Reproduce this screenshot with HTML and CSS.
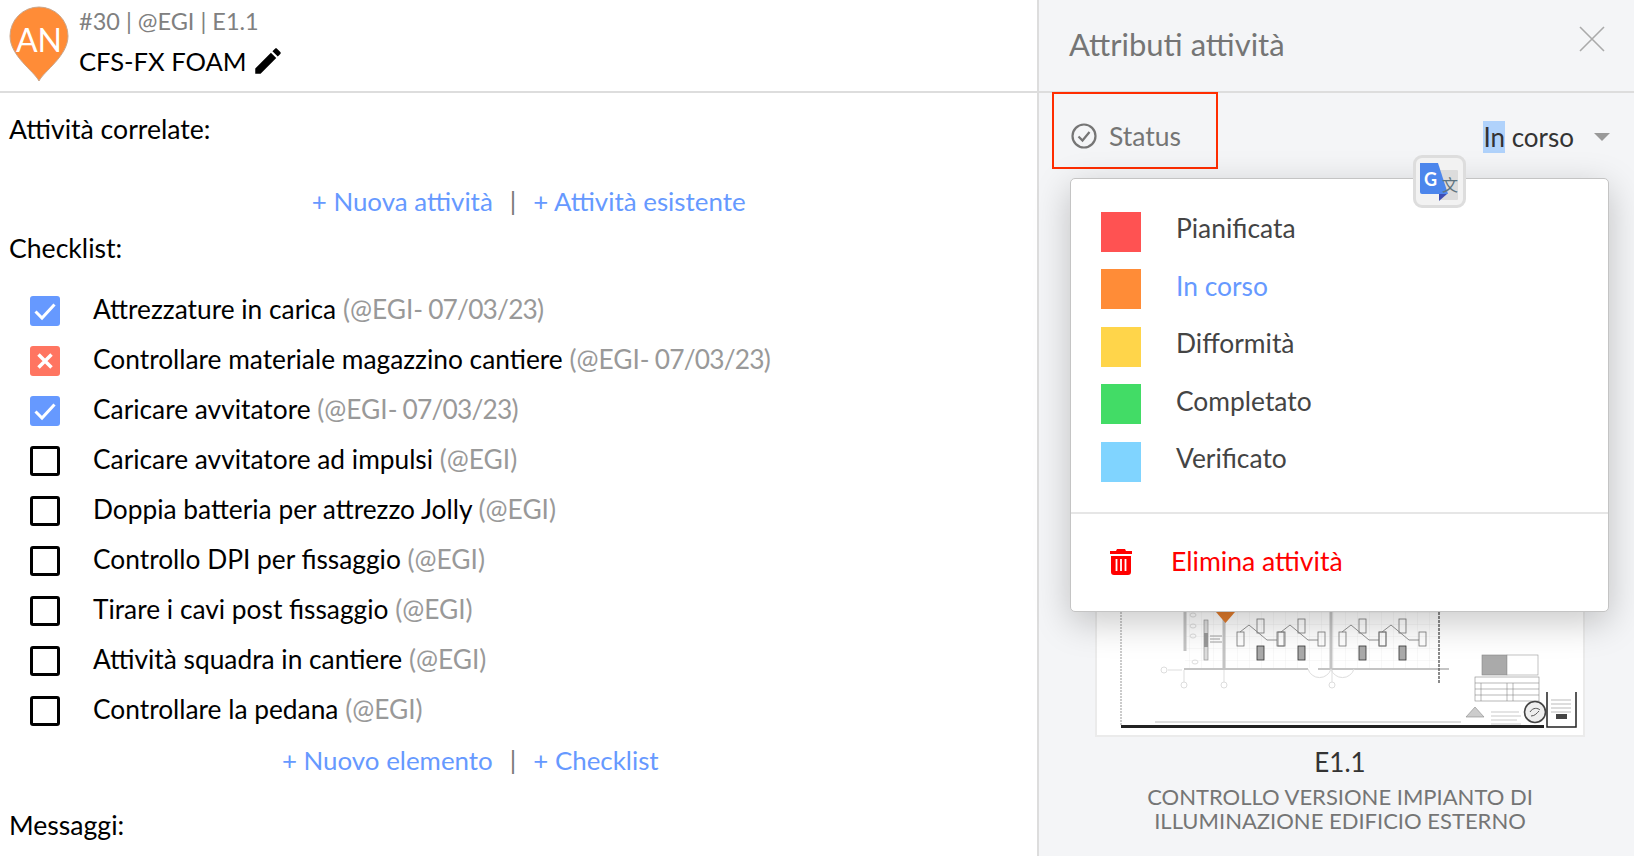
FILE: index.html
```html
<!DOCTYPE html>
<html lang="it">
<head>
<meta charset="UTF-8" />
<title>Attività</title>
<link rel="stylesheet" href="styles.css">
</head>
<body>

<main class="detail">
  <header class="detail-head">
    <div class="pin">
      <svg width="60" height="76" viewBox="0 0 60 76"><path d="M30 75 C25 65 1 50 1 30 A29 29 0 0 1 59 30 C59 50 35 65 30 75 Z" fill="#ff8c37" stroke="#c9a68c" stroke-width="1"/></svg>
      <span class="pin-label">AN</span>
    </div>
    <div class="head-text">
      <div class="head-meta">#30 | @EGI | E1.1</div>
      <div class="head-title">CFS-FX FOAM
        <svg class="pencil" width="34" height="34" viewBox="0 0 24 24"><path d="M3 17.25V21h3.75L17.81 9.94l-3.75-3.75L3 17.25zM20.71 7.04c.39-.39.39-1.02 0-1.41l-2.34-2.34c-.39-.39-1.02-.39-1.41 0l-1.83 1.83 3.75 3.75 1.83-1.83z"/></svg>
      </div>
    </div>
  </header>

  <div class="section-title first">Attività correlate:</div>
  <div class="links links-top">
    <a class="link-left">+ Nuova attività</a><span class="sep">|</span><a>+ Attività esistente</a>
  </div>
  <div class="section-title">Checklist:</div>

  <ul class="checklist">
    <li><span class="box done"><svg width="30" height="30" viewBox="0 0 30 30"><path d="M5.500 15.500l6.500 6.500L24.500 8.500" fill="none" stroke="#fff" stroke-width="3"/></svg></span>Attrezzature in carica <span class="who">(@EGI<span class="date">- 07/03/23</span>)</span></li>
    <li><span class="box fail"><svg width="30" height="30" viewBox="0 0 30 30"><path d="M8.500 8.500l13 13M21.500 8.500l-13 13" fill="none" stroke="#fff" stroke-width="3.500"/></svg></span>Controllare materiale magazzino cantiere <span class="who">(@EGI<span class="date">- 07/03/23</span>)</span></li>
    <li><span class="box done"><svg width="30" height="30" viewBox="0 0 30 30"><path d="M5.500 15.500l6.500 6.500L24.500 8.500" fill="none" stroke="#fff" stroke-width="3"/></svg></span>Caricare avvitatore <span class="who">(@EGI<span class="date">- 07/03/23</span>)</span></li>
    <li><span class="box"></span>Caricare avvitatore ad impulsi <span class="who">(@EGI)</span></li>
    <li><span class="box"></span>Doppia batteria per attrezzo Jolly <span class="who">(@EGI)</span></li>
    <li><span class="box"></span>Controllo DPI per fissaggio <span class="who">(@EGI)</span></li>
    <li><span class="box"></span>Tirare i cavi post fissaggio <span class="who">(@EGI)</span></li>
    <li><span class="box"></span>Attività squadra in cantiere <span class="who">(@EGI)</span></li>
    <li><span class="box"></span>Controllare la pedana <span class="who">(@EGI)</span></li>
  </ul>

  <div class="links links-bottom">
    <a class="link-left">+ Nuovo elemento</a><span class="sep">|</span><a>+ Checklist</a>
  </div>
  <div class="section-title messages">Messaggi:</div>
</main>

<aside class="attrs">
  <div class="attrs-head">
    <h2>Attributi attività</h2>
    <svg class="close" width="28" height="28" viewBox="0 0 28 28"><path d="M2 2l24 24M26 2L2 26" stroke="#aaa" stroke-width="1.600" fill="none"/></svg>
  </div>

  <div class="status-row">
    <div class="status-label">
      <svg width="26" height="26" viewBox="0 0 26 26"><circle cx="13" cy="13" r="11.500" fill="none" stroke="#757575" stroke-width="2.200"/><path d="M7.500 13.500l4 4L18.500 9" fill="none" stroke="#757575" stroke-width="2.200"/></svg>
      Status
    </div>
    <div class="status-value"><span class="selected">In</span> corso<span class="caret"></span></div>
  </div>

  <figure class="plan">
    <div class="plan-sheet">
      <svg width="486" height="300" viewBox="1096 437 486 300">
        <defs>
          <g id="unit" fill="none" stroke="#777" stroke-width="0.800">
            <rect x="1236" y="632" width="7" height="14"/>
            <rect x="1256" y="619" width="7" height="14"/>
            <rect x="1276" y="632" width="7" height="14"/>
            <rect x="1256" y="646" width="7" height="14" fill="#aaa" stroke="#333"/>
            <path d="M1239 632l9-7 18 15M1266 640h10"/>
          </g>
          <pattern id="grid" width="12" height="12" patternUnits="userSpaceOnUse"><path d="M12 0H0V12" fill="none" stroke="#e8e8e8" stroke-width="0.600"/></pattern>
        </defs>
        <rect x="1184" y="600" width="256" height="68" fill="url(#grid)"/>
        <path d="M1120 600V726" stroke="#bbb" stroke-width="1.500" stroke-dasharray="2 1"/>
        <rect x="1120" y="725" width="423" height="3" fill="#222"/>
        <path d="M1154 722H1460" stroke="#bbb" stroke-width="1"/>
        <path d="M1184 600V651M1223 600V669M1330 600V669" stroke="#c4c4c4" stroke-width="3"/>
        <path d="M1183 669H1307M1317 669H1448" stroke="#c4c4c4" stroke-width="2"/>
        <path d="M1438 600V684" stroke="#666" stroke-width="1.500" stroke-dasharray="3 1"/>
        <rect x="1203" y="620" width="4" height="40" fill="#ddd" stroke="#888" stroke-width="0.600"/>
        <rect x="1203" y="633" width="4" height="14" fill="#999"/>
        <path d="M1209 636h12M1209 639h10M1209 642h12" stroke="#888" stroke-width="0.800"/>
        <g fill="none" stroke="#ddd" stroke-width="1">
          <ellipse cx="1192" cy="615" rx="3" ry="2"/><ellipse cx="1192" cy="626" rx="3" ry="2"/><ellipse cx="1192" cy="636" rx="3" ry="2"/><ellipse cx="1194" cy="662" rx="3" ry="2"/>
          <circle cx="1163" cy="670" r="3"/><circle cx="1183" cy="685" r="3"/><circle cx="1223" cy="685" r="3"/><circle cx="1331" cy="685" r="3"/>
          <path d="M1167 670h14M1183 670v12M1223 670v12M1331 670v12M1307 669a12 12 0 0 0 23 0M1330 669a12 12 0 0 0 23 0"/>
        </g>
        <use href="#unit"/>
        <use href="#unit" x="41"/>
        <use href="#unit" x="102"/>
        <use href="#unit" x="142"/>
        <path d="M1215 612h19l-9.500 11z" fill="#e07b2c"/>
        <rect x="1481" y="655" width="25" height="20" fill="#aaa" stroke="#888" stroke-width="0.600"/>
        <rect x="1506" y="655" width="31" height="20" fill="#fff" stroke="#999" stroke-width="0.600"/>
        <g fill="none" stroke="#888" stroke-width="0.600">
          <rect x="1474" y="677" width="64" height="24"/>
          <path d="M1474 683h64M1506 683v18M1474 689h64M1474 695h64M1480 683v18M1512 683v18"/>
        </g>
        <path d="M1465 717l9-10 9 10z" fill="#ccc" stroke="#888" stroke-width="0.600"/>
        <path d="M1490 712h28M1490 716h30M1490 720h26M1490 724h30" stroke="#bbb" stroke-width="0.800"/>
        <circle cx="1534" cy="712" r="10.500" fill="#eee" stroke="#444" stroke-width="1.600"/>
        <path d="M1529 712c3-5 8-4 10-2M1530 716c4 0 6-3 8-5" stroke="#555" fill="none"/>
        <path d="M1546 692V727H1575V692" fill="#fff" stroke="#222" stroke-width="1.500"/>
        <path d="M1550 700h20M1550 704h20M1550 708h20M1550 712h20" stroke="#aaa" stroke-width="0.800"/>
        <rect x="1555" y="714" width="11" height="5" fill="#444"/>
      </svg>
    </div>
    <figcaption>
      <div class="plan-code">E1.1</div>
      <div class="plan-name">CONTROLLO VERSIONE IMPIANTO DI ILLUMINAZIONE EDIFICIO ESTERNO</div>
    </figcaption>
  </figure>
</aside>

<!-- annotation and menu lie over the panel -->
<div class="red-frame"></div>

<div class="menu">
  <ul class="menu-list">
    <li><span class="swatch red"></span><span class="item-name">Pianificata</span></li>
    <li class="active"><span class="swatch orange"></span><span class="item-name">In corso</span></li>
    <li><span class="swatch yellow"></span><span class="item-name">Difformità</span></li>
    <li><span class="swatch green"></span><span class="item-name">Completato</span></li>
    <li><span class="swatch sky"></span><span class="item-name">Verificato</span></li>
  </ul>
  <div class="menu-delete">
    <svg width="24" height="27" viewBox="0 0 24 27"><path d="M8 1h8l1 2h6v3H1V3h6zM2 8h20v16a3 3 0 0 1-3 3H5a3 3 0 0 1-3-3z" fill="#f00"/><path d="M7.500 11v12M12 11v12M16.500 11v12" stroke="#fff" stroke-width="1.800"/></svg>
    <span>Elimina attività</span>
  </div>
</div>

<div class="translate">
  <svg width="46" height="46" viewBox="0 0 46 46">
    <rect x="22" y="11" width="19" height="30" rx="1" fill="#dcdcdc"/>
    <path d="M22 35h8l-8 7z" fill="#3c4db5"/>
    <path d="M3 4h18l10 31H5a2 2 0 0 1-2-2z" fill="#4c86ec"/>
    <text x="7" y="27" class="tr-g">G</text>
    <text x="25" y="32" class="tr-wen">文</text>
  </svg>
</div>

</body>
</html>
```

FILE: styles.css
```css
* {
  box-sizing: border-box;
}

body {
  margin: 0;
  height: 856px;
  overflow: hidden;
  display: flex;
  font-family: Lato, Arial, sans-serif;
  font-size: 26.600px;
  color: #000;
  background: #fff;
}

/* left panel */
.detail {
  width: 1039px;
  border-right: 2px solid #ddd;
  flex-shrink: 0;
}

.detail-head {
  height: 93px;
  border-bottom: 2px solid #ddd;
  display: flex;
  padding: 6px 0 0 9px;
  gap: 10px;
}

.pin {
  position: relative;
  width: 60px;
  height: 76px;
}

.pin-label {
  position: absolute;
  left: 0;
  right: 0;
  top: 16px;
  text-align: center;
  color: #fff;
  font-size: 32px;
  line-height: 36px;
}

.head-meta {
  font-size: 23.500px;
  line-height: 30px;
  color: #808080;
}

.head-title {
  display: flex;
  align-items: center;
  gap: 4px;
  line-height: 30px;
  margin-top: 8px;
  font-size: 25.600px;
}

.section-title {
  line-height: 30px;
  padding-left: 9px;
}

.section-title.first {
  margin-top: 21px;
}

.section-title.messages {
  margin-top: 35px;
}

.links {
  display: grid;
  grid-template-columns: 1fr auto 1fr;
  width: 1026px;
  line-height: 30px;
  color: #6699ff;
  font-size: 25.900px;
}

.links-top {
  margin: 42px 0 17px;
}

.links-bottom {
  margin-top: 11px;
}

.link-left {
  text-align: right;
}

.sep {
  color: #777;
  padding: 0 17px;
}

.checklist {
  list-style: none;
  margin: 21px 0 0;
  padding: 0 0 0 30px;
  font-size: 26.300px;
}

.checklist li {
  height: 50px;
  display: flex;
  align-items: center;
  white-space: pre-wrap;
}

.box {
  width: 30px;
  height: 30px;
  margin: 4px 33px 0 0;
  border: 3px solid #000;
  border-radius: 3px;
  flex-shrink: 0;
}

.box.done,
.box.fail {
  border: none;
  background: #6699ff;
}

.box.fail {
  background: #ff7561;
}

.box svg {
  display: block;
}

.who {
  color: #999;
}

.date {
  letter-spacing: -0.800px;
}

/* right panel */
.attrs {
  flex: 1;
  background: #f4f5f7;
}

.attrs-head {
  height: 93px;
  border-bottom: 2px solid #ddd;
  padding: 0 28px 0 30px;
  display: flex;
  justify-content: space-between;
}

.attrs-head h2 {
  margin: 26px 0 0;
  font-size: 31px;
  font-weight: 400;
  line-height: 36px;
  color: #757575;
}

.close {
  margin-top: 25px;
}

.status-row {
  display: flex;
  justify-content: space-between;
  align-items: center;
  height: 86px;
  padding: 0 24px 0 32px;
}

.status-label {
  display: flex;
  align-items: center;
  gap: 12px;
  color: #757575;
  font-size: 26.500px;
}

.status-value {
  display: flex;
  align-items: center;
  margin-top: 2px;
  color: #333;
  font-size: 26px;
  white-space: pre;
}

.selected {
  background: #b0d2fb;
}

.caret {
  width: 0;
  height: 0;
  margin-left: 20px;
  border-left: 8px solid transparent;
  border-right: 8px solid transparent;
  border-top: 8px solid #999;
}

.plan {
  margin: 258px 0 0 56px;
  width: 490px;
}

.plan-sheet {
  height: 300px;
  background: #fff;
  border: 2px solid #ebebeb;
  border-top: none;
  overflow: hidden;
}

.plan-sheet svg {
  display: block;
}

figcaption {
  text-align: center;
}

.plan-code {
  margin-top: 10px;
  font-size: 26px;
  line-height: 30px;
  color: #333;
}

.plan-name {
  margin: 8px auto 0;
  width: 420px;
  font-size: 22px;
  line-height: 24px;
  color: #757575;
}

/* things on top of the panel */
.red-frame {
  position: absolute;
  left: 1052px;
  top: 92px;
  width: 166px;
  height: 77px;
  border: 2px solid #ff2d00;
}

.menu {
  position: absolute;
  left: 1070px;
  top: 178px;
  width: 539px;
  height: 434px;
  background: #fff;
  border: 1px solid #c4c4c4;
  border-radius: 5px;
  box-shadow: 0 10px 36px rgba(0, 0, 0, 0.22);
}

.menu-list {
  list-style: none;
  margin: 0;
  padding: 24px 0 0 30px;
  height: 335px;
  border-bottom: 2px solid #e6e6e6;
  font-size: 26.400px;
  color: #444;
}

.menu-list li {
  display: flex;
  align-items: center;
  height: 57.500px;
}

.menu-list li.active {
  color: #6699ff;
}

.item-name {
  margin-bottom: 7px;
}

.swatch {
  width: 40px;
  height: 40px;
  margin-right: 35px;
}

.swatch.red { background: #ff5252; }
.swatch.orange { background: #ff8c37; }
.swatch.yellow { background: #ffd54a; }
.swatch.green { background: #42dc66; }
.swatch.sky { background: #80d4ff; }

.menu-delete {
  display: flex;
  align-items: center;
  gap: 38px;
  padding: 31px 0 0 38px;
  color: #f00;
}

.translate {
  position: absolute;
  left: 1413px;
  top: 155px;
  width: 53px;
  height: 53px;
  padding: 1px;
  background: #f2f2f2;
  border: 3px solid #ddd;
  border-radius: 9px;
}

.translate svg {
  display: block;
}

.tr-g {
  font-size: 18px;
  font-weight: 700;
  fill: #fff;
}

.tr-wen {
  font-family: "Noto Sans CJK SC", sans-serif;
  font-size: 16px;
  fill: #5f7480;
}
```
